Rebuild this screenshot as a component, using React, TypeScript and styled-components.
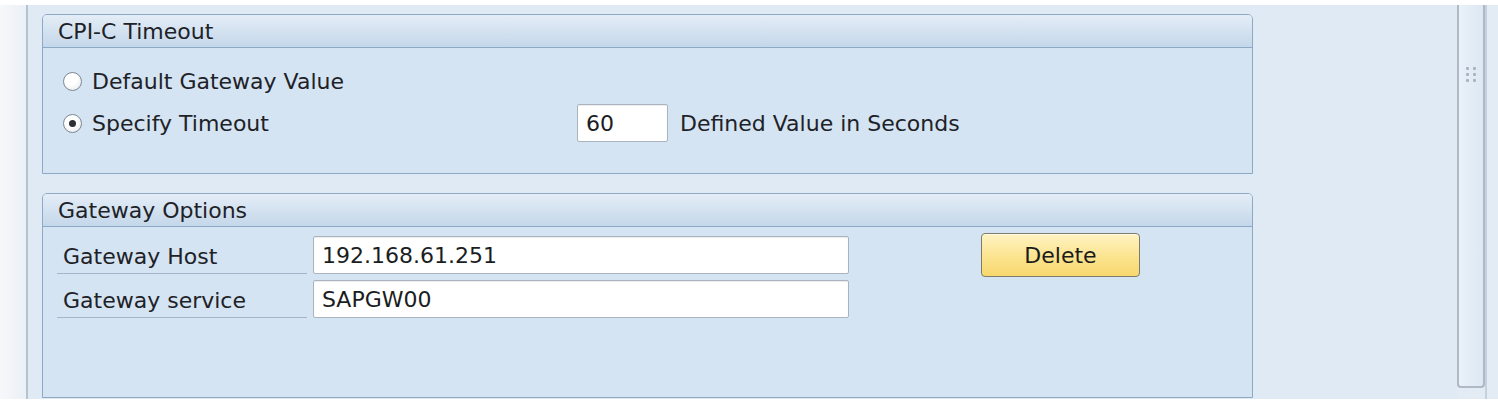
import styled, { createGlobalStyle } from 'styled-components';

const GlobalStyle = createGlobalStyle`
  html, body {
    margin: 0;
    padding: 0;
    background: #ffffff;
  }
  body {
    font-family: "DejaVu Sans", Verdana, sans-serif;
    color: #1f2329;
  }
`;

const Screen = styled.div`
  display: flex;
  width: 1498px;
  height: 403px;
  padding-top: 5px;
  box-sizing: border-box;
  background: #ffffff;
`;

const Gutter = styled.div`
  width: 26px;
  height: 394px;
  background: linear-gradient(to right, #f6f8fb, #eaf0f6);
  border-right: 2px solid #b4c3d2;
`;

const Content = styled.main`
  flex: 1;
  height: 394px;
  box-sizing: border-box;
  padding: 9px 0 0 14px;
  background: #dfeaf5;
  display: flex;
  flex-direction: column;
  gap: 19px;
`;

const GroupBox = styled.section<{ $height: number }>`
  width: 1211px;
  height: ${(p) => p.$height}px;
  box-sizing: border-box;
  border: 1px solid #8ea9c5;
  border-radius: 5px 5px 0 0;
  background: #d4e4f3;
  display: flex;
  flex-direction: column;
`;

const GroupTitle = styled.h2`
  margin: 0;
  height: 32px;
  line-height: 33px;
  padding-left: 15px;
  font-size: 22px;
  font-weight: normal;
  color: #1e2227;
  border-bottom: 1px solid #8ea9c5;
  border-radius: 4px 4px 0 0;
  background: linear-gradient(to bottom, #e4edf7, #c4d7ea);
`;

const TimeoutGrid = styled.div`
  display: grid;
  grid-template-columns: 514px 91px auto;
  grid-template-rows: 40px 40px;
  row-gap: 2px;
  align-items: center;
  padding: 13px 0 0 20px;
`;

const RadioLabel = styled.label`
  grid-column: 1;
  display: flex;
  align-items: center;
  gap: 10px;
  font-size: 22px;
  color: #1e2227;
`;

const RadioCircle = styled.span<{ $checked?: boolean }>`
  position: relative;
  width: 19px;
  height: 19px;
  box-sizing: border-box;
  border-radius: 50%;
  border: 1px solid #7d8894;
  background: radial-gradient(circle at 40% 35%, #ffffff 40%, #dfe3e8 100%);

  &::after {
    content: '';
    display: ${(p) => (p.$checked ? 'block' : 'none')};
    position: absolute;
    left: 5px;
    top: 5px;
    width: 7px;
    height: 7px;
    border-radius: 50%;
    background: #2b2f35;
  }
`;

const Field = styled.input<{ $width: number }>`
  width: ${(p) => p.$width}px;
  height: 38px;
  box-sizing: border-box;
  padding: 0 8px;
  border: 1px solid #a9b4bf;
  border-radius: 2px;
  background: #ffffff;
  box-shadow: inset 0 1px 1px rgba(0, 0, 0, 0.08);
  font-family: "DejaVu Sans", Verdana, sans-serif;
  font-size: 22px;
  color: #1a1d21;
  outline: none;
`;

const UnitText = styled.span`
  padding-left: 12px;
  font-size: 22px;
  color: #1e2227;
`;

const GatewayGrid = styled.div`
  display: grid;
  grid-template-columns: 256px 536px 132px 159px;
  grid-template-rows: 38px 38px;
  row-gap: 6px;
  align-items: center;
  padding: 9px 0 0 14px;
`;

const FieldLabel = styled.div`
  grid-column: 1;
  height: 38px;
  line-height: 41px;
  box-sizing: border-box;
  padding-left: 6px;
  margin-right: 6px;
  font-size: 22px;
  color: #1e2227;
  border-bottom: 1px solid #a3b5c8;
`;

const DeleteButton = styled.button`
  grid-column: 4;
  grid-row: 1;
  align-self: center;
  width: 159px;
  height: 44px;
  border: 1px solid #7f7c6c;
  border-radius: 4px;
  background: linear-gradient(to bottom, #fff3c2, #fbe28a 60%, #f7d86e);
  box-shadow: inset 0 1px 0 #fffbe6;
  font-family: "DejaVu Sans", Verdana, sans-serif;
  font-size: 22px;
  color: #1a1a1a;
`;

const ScrollArea = styled.aside`
  width: 41px;
  height: 394px;
  background: #e3ecf5;
  display: flex;
`;

const ScrollThumb = styled.div`
  width: 28px;
  height: 383px;
  box-sizing: border-box;
  border: 2px solid #aeb9c5;
  border-top: none;
  border-radius: 0 0 4px 4px;
  background: linear-gradient(to right, #e9f1f9, #dde8f3);
  display: flex;
  justify-content: center;
  padding-top: 62px;
`;

const Grip = styled.div`
  display: grid;
  grid-template-columns: 3px 3px;
  grid-auto-rows: 3px;
  gap: 3px 4px;
  height: 15px;

  span {
    background: #a9b4c0;
    border-radius: 1px;
  }
`;

const ScrollEdge = styled.div`
  width: 2px;
  height: 394px;
  background: #c4d1de;
`;

export default function App() {
  return (
    <>
      <GlobalStyle />
      <Screen>
        <Gutter />
        <Content>
          <GroupBox $height={160}>
            <GroupTitle>CPI-C Timeout</GroupTitle>
            <TimeoutGrid>
              <RadioLabel>
                <RadioCircle />
                Default Gateway Value
              </RadioLabel>
              <RadioLabel>
                <RadioCircle $checked />
                Specify Timeout
              </RadioLabel>
              <Field $width={91} value="60" readOnly />
              <UnitText>Defined Value in Seconds</UnitText>
            </TimeoutGrid>
          </GroupBox>

          <GroupBox $height={205}>
            <GroupTitle>Gateway Options</GroupTitle>
            <GatewayGrid>
              <FieldLabel>Gateway Host</FieldLabel>
              <Field $width={536} value="192.168.61.251" readOnly />
              <DeleteButton>Delete</DeleteButton>
              <FieldLabel>Gateway service</FieldLabel>
              <Field $width={536} value="SAPGW00" readOnly />
            </GatewayGrid>
          </GroupBox>
        </Content>
        <ScrollArea>
          <ScrollThumb>
            <Grip>
              <span />
              <span />
              <span />
              <span />
              <span />
              <span />
            </Grip>
          </ScrollThumb>
          <ScrollEdge />
        </ScrollArea>
      </Screen>
    </>
  );
}
